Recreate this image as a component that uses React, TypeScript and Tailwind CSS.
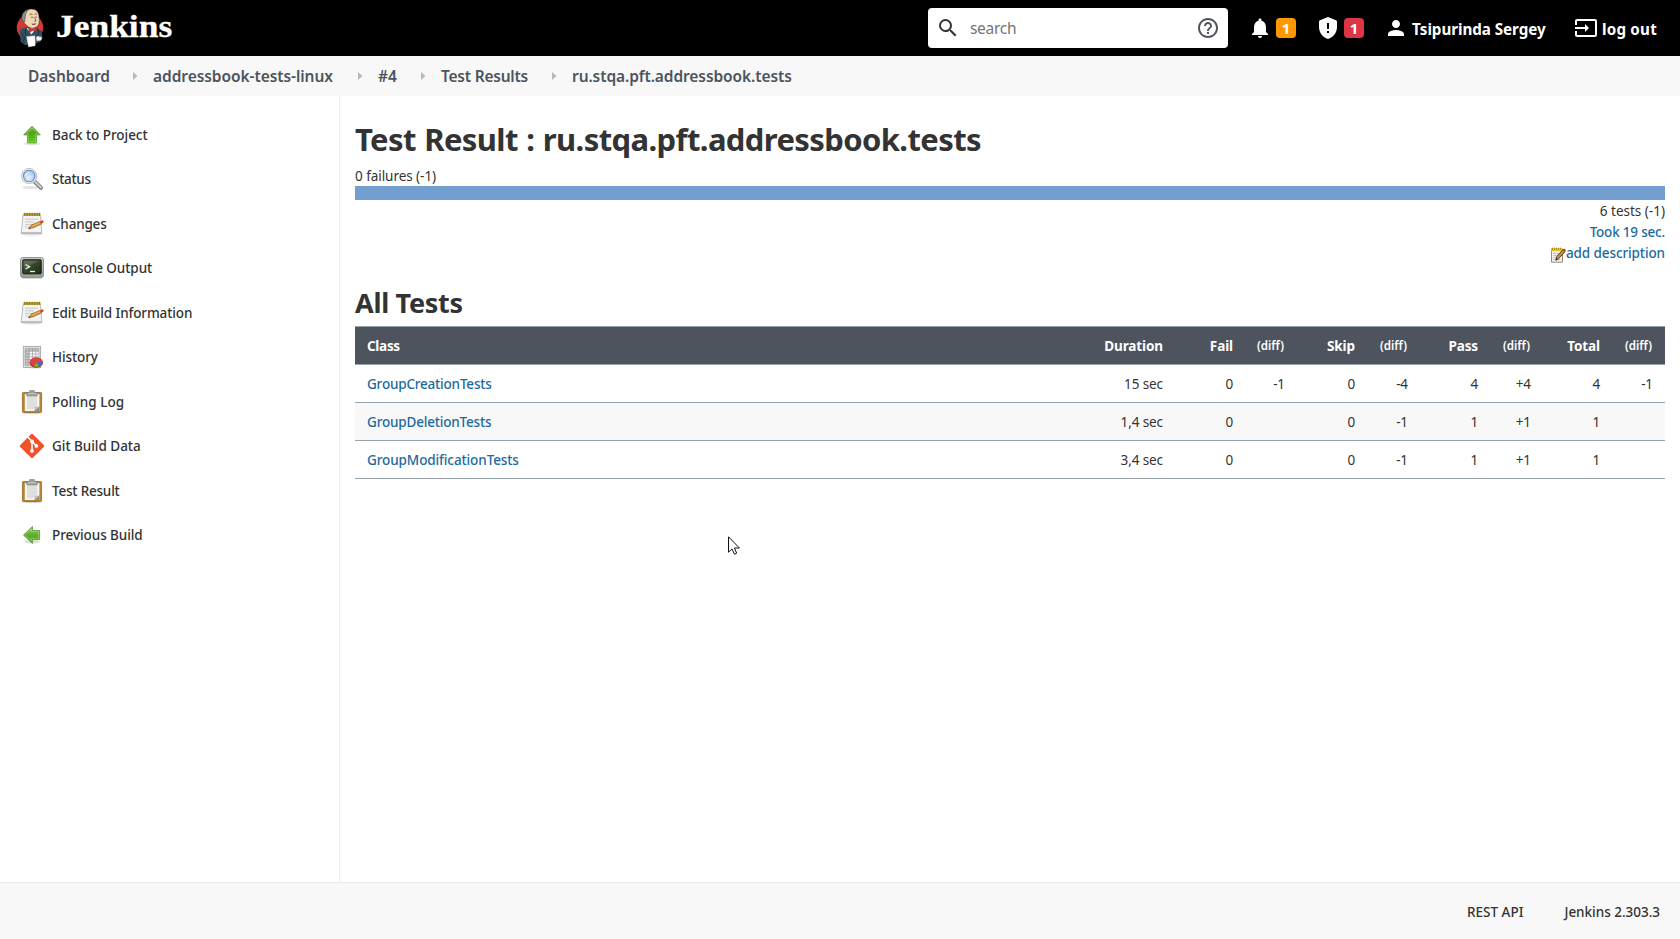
import React from 'react';

type IconProps = { className?: string };

function Material({ d, className = '' }: { d: string; className?: string }) {
  return (
    <svg viewBox="0 0 24 24" className={`size-6 shrink-0 fill-current ${className}`}>
      <path d={d} />
    </svg>
  );
}

const SEARCH =
  'M15.5 14h-.79l-.28-.27A6.47 6.47 0 0 0 16 9.5 6.5 6.5 0 1 0 9.5 16c1.61 0 3.09-.59 4.23-1.57l.27.28v.79l5 4.99L20.49 19l-4.99-5zm-6 0C7.01 14 5 11.99 5 9.5S7.01 5 9.5 5 14 7.01 14 9.5 11.99 14 9.5 14z';
const HELP =
  'M11 18h2v-2h-2v2zm1-16C6.48 2 2 6.48 2 12s4.48 10 10 10 10-4.48 10-10S17.52 2 12 2zm0 18c-4.41 0-8-3.59-8-8s3.59-8 8-8 8 3.59 8 8-3.59 8-8 8zm0-14c-2.21 0-4 1.79-4 4h2c0-1.1.9-2 2-2s2 .9 2 2c0 2-3 1.75-3 5h2c0-2.25 3-2.5 3-5 0-2.21-1.79-4-4-4z';
const BELL =
  'M12 22c1.1 0 2-.9 2-2h-4c0 1.1.89 2 2 2zm6-6v-5c0-3.07-1.64-5.64-4.5-6.32V4c0-.83-.67-1.5-1.5-1.5s-1.5.67-1.5 1.5v.68C7.63 5.36 6 7.92 6 11v5l-2 2v1h16v-1l-2-2z';
const SHIELD =
  'M12 1L4 4.2C3.4 4.45 3 5 3 5.6V11c0 5.55 3.84 10.74 9 12 5.16-1.26 9-6.45 9-12V5.6c0-.6-.4-1.15-1-1.4L12 1zM11 7h2v6h-2V7zm0 8h2v2h-2v-2z';
const PERSON =
  'M12 12c2.21 0 4-1.79 4-4s-1.79-4-4-4-4 1.79-4 4 1.79 4 4 4zm0 2c-2.67 0-8 1.34-8 4v2h16v-2c0-2.66-5.33-4-8-4z';
const LOGOUT =
  'M21 3.01H3c-1.1 0-2 .9-2 2V9h2V4.99h18v14.03H3V15H1v4.01c0 1.1.9 1.98 2 1.98h18c1.1 0 2-.88 2-1.98v-14c0-1.11-.9-2-2-2zM11 16l4-4-4-4v3H1v2h10v3z';

function JenkinsLogo() {
  return (
    <svg viewBox="0 0 28 40" className="h-10 w-7 shrink-0">
      <ellipse cx="14" cy="19.5" rx="13.2" ry="13" fill="#d33833" />
      <path d="M4 21.5 10.500 19l9 .5 6 3.5 1 6-2.500 4.500-6 3-9 .5-4.500-3.500z" fill="#335061" />
      <path d="M7 9c1-5.500 4.500-8 8.500-8C20.500 1 23 4.500 23 9c1 5-.2 8.500-3.200 10.600-2 1.100-5.300.8-7.300-.6L8.500 15.500 6 11z" fill="#f0d6b7" stroke="#2b2320" strokeWidth=".5" />
      <path d="M6 12C4.800 6.500 8 2.200 13 1.200 10 3.500 9.500 6 9.300 8.500L8.600 14z" fill="#8b8f94" stroke="#3a3330" strokeWidth=".5" />
      <path d="M13.500 6.500q1.500-1 3 0M18.500 6.300q1.300-.8 2.500 0M15 9.500q1.200-.8 2.400 0M19.200 9.300q1-.7 1.900 0M18.500 9.500l1.500 3.500-1.800.4" fill="none" stroke="#4a3a30" strokeWidth=".7" />
      <path d="M15.500 15.300q2.500 1.200 4.500-.2l-.8 1.600-2.600.3z" fill="#7b3b35" />
      <path d="M10.500 20l5 6.500 4.500-6z" fill="#f4f4f4" />
      <path d="M12.500 19.500l3.800 1.300 4.200-1.600.6 4.600-4.200-1.200-3.700 2z" fill="#d33833" stroke="#7a1c1c" strokeWidth=".4" />
      <path d="M10 20l-1 5 4 5M21 20.500l2 4-3 5M4.500 25l4 4-1 5" fill="none" stroke="#16232c" strokeWidth=".7" />
      <path d="M10.500 28.500l8.500-.8.300 10-6.800 1.300z" fill="#fff" stroke="#b9b9b9" strokeWidth=".4" />
      <path d="M20 29.500c1-2 2.500-2 3.500-.8 1.500-.6 2.800.6 2.500 2.300l-1.500 1.800-4 .2z" fill="#f6f6f6" stroke="#6b6b6b" strokeWidth=".5" />
    </svg>
  );
}

function UpArrow() {
  return (
    <svg viewBox="0 0 24 24" className="size-6">
      <defs>
        <linearGradient id="ga" x1="0" y1="0" x2="0.300" y2="1">
          <stop offset="0" stopColor="#9ccf70" />
          <stop offset=".5" stopColor="#4da21a" />
          <stop offset="1" stopColor="#62c717" />
        </linearGradient>
      </defs>
      <ellipse cx="12" cy="20.700" rx="8" ry="1.500" fill="#000" opacity=".12" />
      <path d="M12 3.200l8.300 8.700h-3.900v8H7.600v-8H3.700z" fill="url(#ga)" stroke="#5fa338" strokeWidth=".9" strokeLinejoin="round" />
      <path d="M12 4.800l6 6.300h-2.500v7.800h-7v-7.800H6z" fill="none" stroke="#b4e28c" strokeWidth=".6" opacity=".6" />
    </svg>
  );
}

function LeftArrow() {
  return (
    <svg viewBox="0 0 24 24" className="size-6">
      <defs>
        <linearGradient id="gb" x1="0" y1="0" x2="0" y2="1">
          <stop offset="0" stopColor="#a6cf85" />
          <stop offset=".5" stopColor="#5fac2a" />
          <stop offset="1" stopColor="#4fae12" />
        </linearGradient>
      </defs>
      <ellipse cx="12" cy="18.500" rx="8" ry="2" fill="#000" opacity=".13" />
      <path d="M3.500 12l8.900-8.400v4h7.200v8.800h-7.200v4z" fill="url(#gb)" stroke="#5a9f33" strokeWidth=".9" strokeLinejoin="round" />
      <path d="M5.200 12l6.200-5.900v2.500h7.200v6.800h-7.200v2.500z" fill="none" stroke="#c2e5a5" strokeWidth=".6" opacity=".7" />
    </svg>
  );
}

function Magnifier() {
  return (
    <svg viewBox="0 0 24 24" className="size-6">
      <defs>
        <radialGradient id="gc" cx=".45" cy=".65" r=".7">
          <stop offset="0" stopColor="#e3efff" />
          <stop offset="1" stopColor="#a3c4ee" />
        </radialGradient>
      </defs>
      <ellipse cx="11" cy="20.500" rx="9" ry="1.600" fill="#000" opacity=".1" />
      <path d="M14.500 14.500l6.500 6.300" stroke="#77797b" strokeWidth="4" strokeLinecap="round" />
      <path d="M14.800 14.500l6.200 6" stroke="#c9cacb" strokeWidth="2.200" strokeLinecap="round" />
      <circle cx="9.200" cy="9" r="7.600" fill="#eceeed" stroke="#a5a8a8" strokeWidth=".7" />
      <circle cx="9.200" cy="9" r="5.700" fill="url(#gc)" stroke="#5f8fcb" strokeWidth="1.100" />
      <path d="M5.500 9c0-2 1.500-3.700 3.700-3.700" fill="none" stroke="#fff" strokeWidth="1" opacity=".8" />
    </svg>
  );
}

function Notepad() {
  return (
    <svg viewBox="0 0 24 24" className="size-6">
      <ellipse cx="12" cy="22.300" rx="10" ry="1.200" fill="#000" opacity=".13" />
      <path d="M3 3.500h17.500l1.300 18H1.200z" fill="#f3f3f1" stroke="#aaaaa8" strokeWidth=".8" strokeLinejoin="round" />
      <path d="M1.500 20.800h20" stroke="#b9b9b7" strokeWidth="1.300" />
      <path d="M3.500 1h17v2.800h-17z" fill="#b6a232" />
      <path d="M4.700.800v3.200M7.200.800v3.200M9.700.800v3.200M12.200.800v3.200M14.700.800v3.200M17.200.800v3.200M19.500.800v3.200" stroke="#84721a" strokeWidth=".9" />
      <path d="M5 7.200h13M5 9.800h9M5 12.400h8M5 15h4" stroke="#c3c3c2" strokeWidth=".9" />
      <path d="M8.500 16.800l2.800-3.700 9-3.800 1.200 2.600-8.800 4z" fill="#d5963f" stroke="#8d601f" strokeWidth=".7" />
      <path d="M11.800 14.300l8.800-3.900" stroke="#edc37c" strokeWidth=".8" />
      <path d="M8.300 17l1.200-1.700.8.900z" fill="#333" />
      <path d="M20 9.400l2-1c1.300-.3 2.200 1.500 1 2.400l-2 1z" fill="#e13c28" />
    </svg>
  );
}

function Console() {
  return (
    <svg viewBox="0 0 24 24" className="size-6">
      <defs>
        <linearGradient id="gd" x1="0" y1="0" x2="1" y2="1">
          <stop offset="0" stopColor="#4b5c3f" />
          <stop offset=".5" stopColor="#32452a" />
          <stop offset="1" stopColor="#1b2a17" />
        </linearGradient>
        <linearGradient id="ge" x1="0" y1="0" x2="0" y2="1">
          <stop offset="0" stopColor="#c6c8c3" />
          <stop offset="1" stopColor="#989b95" />
        </linearGradient>
      </defs>
      <rect x="2" y="20" width="20" height="3" rx="1" fill="#000" opacity=".15" />
      <rect x=".5" y="1.500" width="23" height="20" rx="2.500" fill="url(#ge)" stroke="#81847d" strokeWidth=".8" />
      <rect x="2.800" y="3.800" width="18.400" height="14" rx=".8" fill="url(#gd)" stroke="#14190f" strokeWidth="1" />
      <path d="M3.500 4.500h17L3.500 12z" fill="#fff" opacity=".14" />
      <path d="M5.500 8.500l4 2.200-4 2.300" fill="none" stroke="#e9efe4" strokeWidth="1.400" />
      <path d="M10 15.500h5" stroke="#e9efe4" strokeWidth="1.300" />
      <circle cx="16.500" cy="19.800" r=".7" fill="#7ddb3d" />
    </svg>
  );
}

function History() {
  return (
    <svg viewBox="0 0 24 24" className="size-6">
      <ellipse cx="15" cy="22.500" rx="7" ry="1" fill="#000" opacity=".18" />
      <rect x="3.300" y="1.400" width="17.300" height="21" fill="#ededec" stroke="#a3a3a2" strokeWidth=".9" />
      <rect x="5" y="3.200" width="14" height="17.600" fill="#f8f8f8" />
      <path d="M5 3.200h14v3H9.200v14.600H5z" fill="#c0c1bf" />
      <path d="M5 6.200h14M5 9h14M5 11.800h14M5 14.600h9M5 17.400h6M9.200 3.200v17.600M12.500 3.200v12M15.800 3.200v9M5 3.200h14v17.600H5z" fill="none" stroke="#959694" strokeWidth=".6" />
      <ellipse cx="16.300" cy="17.700" rx="6.600" ry="5" fill="#a81a1a" />
      <ellipse cx="16.300" cy="17" rx="6.400" ry="4.700" fill="#de3f3f" />
      <path d="M16.300 17l6.300.200c0 2.200-1.500 3.600-3.600 4.300z" fill="#3c74c0" />
      <path d="M16.300 17l2.700 4.500c-1.600.6-3.400.6-4.900.1z" fill="#6cb82c" />
    </svg>
  );
}

function Clipboard() {
  return (
    <svg viewBox="0 0 24 24" className="size-6">
      <ellipse cx="12" cy="23" rx="9" ry="1" fill="#000" opacity=".18" />
      <rect x="2.400" y="2.500" width="19.200" height="20" rx=".8" fill="#b9842f" stroke="#8d611b" strokeWidth=".7" />
      <path d="M4.800 4h14.600v17H4.800z" fill="#f7f7f6" />
      <path d="M7 6.500h10.300v9.500l-3 3.200H7z" fill="#dfdfdd" />
      <path d="M19.400 16.500V21h-5z" fill="#8b8c89" />
      <path d="M14.400 21c.8-1.200 1-2.400.6-3.700 1.600.3 3 0 4.400-.8z" fill="#c9cac7" stroke="#92938f" strokeWidth=".4" />
      <path d="M7.300 2.300h2.400V.600h4.600v1.700h2.400c.9 1 .9 2.500.3 3.700H7c-.6-1.200-.6-2.700.3-3.700z" fill="#a2a49c" stroke="#74766f" strokeWidth=".6" />
      <path d="M8 3.600h8" stroke="#d1d3cc" strokeWidth=".7" />
    </svg>
  );
}

function Git() {
  return (
    <svg viewBox="0 0 24 24" className="size-6">
      <path d="M10.800.500a1.700 1.700 0 0 1 2.400 0l10.300 10.300a1.700 1.700 0 0 1 0 2.400L13.200 23.500a1.700 1.700 0 0 1-2.400 0L.500 13.200a1.700 1.700 0 0 1 0-2.400z" fill="#f4502a" />
      <path d="M8 3.300l4 4v9.500M12 7.500l4.300 4.300" fill="none" stroke="#fff" strokeWidth="1.600" />
      <circle cx="12" cy="7.500" r="1.900" fill="#fff" />
      <circle cx="16.400" cy="11.900" r="1.900" fill="#fff" />
      <circle cx="12" cy="16.900" r="1.900" fill="#fff" />
    </svg>
  );
}

function NoteEdit({ className = '' }: IconProps) {
  return (
    <svg viewBox="0 0 16 16" className={className}>
      <path d="M1.500 2.500h11v12.700h-11z" fill="#f0f0ee" stroke="#8b8b89" strokeWidth="1" />
      <path d="M3.200 6.500h6M3.200 8.500h4M3.200 10.500h3M3.200 12.500h7" stroke="#b5b5b3" strokeWidth=".8" />
      <path d="M1.200 1h11.600v3.200H1.200z" fill="#edc62e" />
      <path d="M2.500.600v2.600M4.500.600v2.600M6.500.600v2.600M8.500.600v2.600M10.500.600v2.600" stroke="#a88610" strokeWidth=".8" />
      <path d="M5.800 13.200l1-3.700 6.300-7 2 2-6.500 7.200z" fill="#c98f3c" stroke="#4b3210" strokeWidth=".9" />
      <path d="M5.800 13.200l.6-2 1.400 1.200z" fill="#222" />
      <path d="M12.600 3l1-1.100c1-.6 2.400.6 1.900 1.700l-.9 1z" fill="#7c4a2a" />
    </svg>
  );
}

const menu = [
  { label: 'Back to Project', icon: UpArrow, track: 'tracking-[-0.05px]' },
  { label: 'Status', icon: Magnifier, track: 'tracking-[-0.3px]' },
  { label: 'Changes', icon: Notepad, track: 'tracking-[-0.2px]' },
  { label: 'Console Output', icon: Console, track: 'tracking-[-0.08px]' },
  { label: 'Edit Build Information', icon: Notepad, track: 'tracking-[-0.11px]' },
  { label: 'History', icon: History, track: 'tracking-[-0.1px]' },
  { label: 'Polling Log', icon: Clipboard, track: 'tracking-[0.05px]' },
  { label: 'Git Build Data', icon: Git, track: 'tracking-[-0.03px]' },
  { label: 'Test Result', icon: Clipboard, track: 'tracking-[-0.2px]' },
  { label: 'Previous Build', icon: LeftArrow, track: 'tracking-[-0.07px]' },
];

const crumbs = [
  { label: 'Dashboard', box: 'w-[125px]', track: 'tracking-[-0.05px]' },
  { label: 'addressbook-tests-linux', box: 'w-[225px]', track: 'tracking-[-0.06px]' },
  { label: '#4', box: 'w-[63px]', track: 'tracking-[-0.1px]' },
  { label: 'Test Results', box: 'w-[131px]', track: 'tracking-[-0.22px]' },
  { label: 'ru.stqa.pft.addressbook.tests', box: '', track: 'tracking-[-0.09px]' },
];

const columns = [
  { label: 'Duration', width: 'w-[82px]', small: false },
  { label: 'Fail', width: 'w-[70px]', small: false },
  { label: '(diff)', width: 'w-[52px]', small: true },
  { label: 'Skip', width: 'w-[70px]', small: false },
  { label: '(diff)', width: 'w-[53px]', small: true },
  { label: 'Pass', width: 'w-[70px]', small: false },
  { label: '(diff)', width: 'w-[53px]', small: true },
  { label: 'Total', width: 'w-[69px]', small: false },
  { label: '(diff)', width: 'w-[53px]', small: true },
];

const rows = [
  { name: 'GroupCreationTests', track: 'tracking-[-0.19px]', cells: ['15 sec', '0', '-1', '0', '-4', '4', '+4', '4', '-1'] },
  { name: 'GroupDeletionTests', track: 'tracking-[-0.18px]', cells: ['1,4 sec', '0', '', '0', '-1', '1', '+1', '1', ''] },
  { name: 'GroupModificationTests', track: 'tracking-[-0.1px]', cells: ['3,4 sec', '0', '', '0', '-1', '1', '+1', '1', ''] },
];

export default function App() {
  return (
    <div className="relative flex h-[939px] w-[1680px] flex-col overflow-hidden bg-white font-['Noto_Sans',sans-serif] text-[13.5px] whitespace-nowrap text-[#333]">
      <header className="flex h-14 shrink-0 items-center bg-black pl-4 text-white">
        <JenkinsLogo />
        <span className="ml-3 w-[130px] origin-left scale-x-[1.143] pb-[3px] font-['Liberation_Serif',serif] text-[31px] leading-none font-bold [-webkit-text-stroke:0.3px_white]">
          Jenkins
        </span>
        <div className="ml-auto flex h-10 w-[300px] items-center rounded bg-white px-2">
          <Material d={SEARCH} className="text-[#333]" />
          <span className="ml-2.5 pt-0.5 text-[15.5px] tracking-[-0.3px] text-[#757575]">search</span>
          <Material d={HELP} className="ml-auto text-[#4d545d]" />
        </div>
        <div className="ml-5 flex items-center gap-1">
          <Material d={BELL} />
          <span className="flex size-5 items-center justify-center rounded bg-[#ff9800] text-[15px] leading-none font-bold">1</span>
        </div>
        <div className="ml-5 flex items-center gap-1">
          <Material d={SHIELD} />
          <span className="flex size-5 items-center justify-center rounded bg-[#dc3545] text-[15px] leading-none font-bold">1</span>
        </div>
        <div className="ml-5 flex items-center gap-1 text-[15.2px] font-bold">
          <Material d={PERSON} />
          <span className="w-[134px] pt-0.5 tracking-[-0.05px]">Tsipurinda Sergey</span>
        </div>
        <div className="ml-7 flex items-center gap-1 pr-[22px] text-[15.2px] font-bold">
          <Material d={LOGOUT} />
          <span className="w-14 pt-0.5 tracking-[0.2px]">log out</span>
        </div>
      </header>

      <nav className="flex h-10 shrink-0 items-center bg-[#f8f8f8] pl-7 text-[15.5px] font-semibold text-[#4d545d]">
        {crumbs.map((c, i) => (
          <div key={c.label} className={`flex items-center justify-between ${c.box}`}>
            <span className={`pt-0.5 ${c.track}`}>{c.label}</span>
            {i < crumbs.length - 1 && (
              <svg viewBox="0 0 20 8" className="h-2 w-5 fill-[#b8b8b8]">
                <path d="M0 0l4.500 4L0 8z" />
              </svg>
            )}
          </div>
        ))}
      </nav>

      <div className="flex min-h-0 flex-1">
        <aside className="w-[340px] shrink-0 border-r border-[#ededed] pt-[16.6px]">
          {menu.map(({ label, icon: Icon, track }) => (
            <a key={label} className="flex h-[44.5px] items-center gap-2 pl-5 font-medium">
              <Icon />
              <span className={track}>{label}</span>
            </a>
          ))}
        </aside>

        <main className="flex-1 pt-[19px] pr-[15px] pl-[15px]">
          <h1 className="flex h-12 items-center text-[31px] font-bold tracking-[-0.61px] [word-spacing:1px]">
            Test Result : ru.stqa.pft.addressbook.tests
          </h1>
          <div className="mt-[3px] h-5 leading-5 tracking-[-0.05px]">0 failures (-1)</div>
          <div className="h-3.5 bg-[#729fcf]" />
          <div className="flex flex-col items-end pt-px leading-[21px]">
            <span>6 tests (-1)</span>
            <span className="font-medium tracking-[-0.2px] text-[#1b6a9f]">Took 19 sec.</span>
            <span className="flex items-center font-medium tracking-[-0.1px] text-[#1b6a9f]">
              <NoteEdit className="mt-[3px] size-4" />
              add description
            </span>
          </div>
          <h2 className="mt-[14px] flex h-12 items-center pt-0.5 text-[27px] font-bold tracking-[-0.3px]">All Tests</h2>
          <table className="w-full table-fixed border-separate border-spacing-0">
            <thead>
              <tr className="bg-[#4d545d] text-white">
                <th className="h-[39px] border-y border-[#98a5af] p-0 pt-0.5 pl-3 text-left font-bold tracking-[-0.3px]">Class</th>
                {columns.map((c, i) => (
                  <th
                    key={i}
                    className={`h-[39px] border-y border-[#98a5af] p-0 text-right ${c.width} ${
                      c.small
                        ? 'pr-[13px] text-[11.6px] font-semibold'
                        : 'pt-0.5 pr-3 font-bold tracking-[-0.1px]'
                    }`}
                  >
                    {c.label}
                  </th>
                ))}
              </tr>
            </thead>
            <tbody>
              {rows.map((r) => (
                <tr key={r.name} className="even:bg-[#f8f8f8]">
                  <td className={`h-[38px] border-b border-[#98a5af] p-0 pt-0.5 pl-3 font-medium text-[#1b6a9f] ${r.track}`}>
                    {r.name}
                  </td>
                  {r.cells.map((v, i) => (
                    <td key={i} className="h-[38px] border-b border-[#98a5af] p-0 pt-0.5 pr-3 text-right tracking-[-0.1px]">
                      {v}
                    </td>
                  ))}
                </tr>
              ))}
            </tbody>
          </table>
        </main>
      </div>

      <footer className="flex h-[57px] shrink-0 items-center justify-end border-t border-[#e6eaec] bg-[#f8f8f8] pt-0.5 pr-5 font-medium">
        <span>REST API</span>
        <span className="ml-[41px] tracking-[-0.02px]">Jenkins 2.303.3</span>
      </footer>

      <svg viewBox="0 0 12 19" className="absolute top-[536px] left-[728px] h-[19px] w-3">
        <path d="M.5.8v15.400l3.500-3.300 2.400 5.300 2.300-1-2.300-5.200h5z" fill="#fff" stroke="#10101c" strokeWidth="1" />
      </svg>
    </div>
  );
}
